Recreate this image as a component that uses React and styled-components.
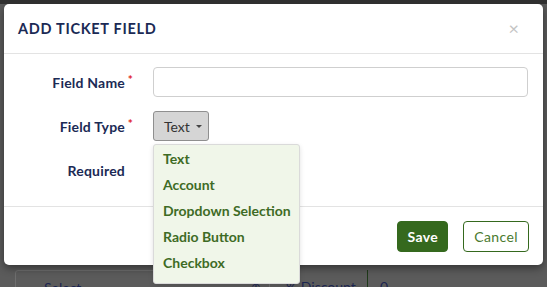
import React from 'react'
import styled, { createGlobalStyle } from 'styled-components'

const GlobalStyle = createGlobalStyle`
  html, body {
    margin: 0;
    padding: 0;
    width: 547px;
    height: 287px;
    overflow: hidden;
    font-family: Lato, "Noto Sans", sans-serif;
  }
`

const Page = styled.div`
  position: relative;
  width: 547px;
  height: 287px;
  background: #5b5b5b;
  overflow: hidden;
  border-top: 4px solid #2f2f2f;
  box-sizing: border-box;
`

const BehindRow = styled.div`
  position: absolute;
  left: 15px;
  top: 266px;
  display: flex;
  align-items: flex-start;
  font-size: 14px;
  color: #1e2a45;
`

const BehindSelect = styled.div`
  width: 255px;
  height: 30px;
  box-sizing: border-box;
  border: 1px solid #6e6e6e;
  border-radius: 3px;
  display: flex;
  justify-content: space-between;
  padding: 8px 8px 0 28px;
  color: #1b2550;
`

const BehindCell = styled.div`
  width: 98px;
  height: 30px;
  box-sizing: border-box;
  border-right: ${p => (p.$last ? 'none' : '1px solid #1f3a1a')};
  padding: 8px 0 0 ${p => (p.$last ? '12px' : '16px')};
  color: #1b2550;
`

const Backdrop = styled.div`
  position: absolute;
  inset: 0;
  padding: 0 4px;
`

const Modal = styled.div`
  width: 539px;
  height: 261px;
  background: #fff;
  border-radius: 5px;
  box-shadow: 0 3px 8px rgba(0, 0, 0, 0.45);
  display: flex;
  flex-direction: column;
  box-sizing: border-box;
`

const Header = styled.div`
  height: 50px;
  box-sizing: border-box;
  border-bottom: 1px solid #e3e3e3;
  display: flex;
  align-items: center;
  justify-content: space-between;
  padding: 0 24px 1px 14px;
`

const Title = styled.h4`
  margin: 0;
  font-size: 14.5px;
  font-weight: 700;
  letter-spacing: 0.7px;
  color: #1b2a55;
`

const Close = styled.span`
  font-size: 18px;
  color: #c4c4c4;
  line-height: 1;
`

const Body = styled.div`
  position: relative;
  height: 153px;
  box-sizing: border-box;
  border-bottom: 1px solid #e3e3e3;
  padding: 13px 15px 0 0;
  display: grid;
  grid-template-columns: 134px 1fr;
  grid-auto-rows: min-content;
  column-gap: 15px;
  row-gap: 14px;
`

const Label = styled.label`
  position: relative;
  height: 30px;
  display: flex;
  align-items: center;
  justify-content: flex-end;
  padding-right: 13px;
  font-size: 14px;
  font-weight: 700;
  letter-spacing: 0.2px;
  color: #1b2a55;
`

const Star = styled.span`
  position: absolute;
  right: 5px;
  top: 5px;
  color: #e02424;
  font-size: 12px;
`

const Input = styled.input`
  height: 30px;
  box-sizing: border-box;
  border: 1px solid #cfcfcf;
  border-radius: 4px;
  outline: none;
`

const SelectWrap = styled.div`
  position: relative;
  height: 30px;
`

const SelectButton = styled.button`
  height: 30px;
  width: 56px;
  box-sizing: border-box;
  background: #d5d5d5;
  border: 1px solid #8f8f8f;
  border-radius: 3px;
  font-family: inherit;
  font-size: 14px;
  color: #333;
  display: flex;
  align-items: center;
  gap: 6px;
  padding: 0 0 0 10px;
`

const Caret = styled.span`
  width: 0;
  height: 0;
  border-left: 3px solid transparent;
  border-right: 3px solid transparent;
  border-top: 3px solid #444;
`

const Checkbox = styled.div`
  width: 13px;
  height: 13px;
  margin-top: 9px;
  border: 1px solid #666;
  border-radius: 2px;
  box-sizing: border-box;
`

const Menu = styled.ul`
  position: absolute;
  left: 0;
  top: 33px;
  width: 147px;
  height: 140px;
  box-sizing: border-box;
  margin: 0;
  padding: 1px 0 8px;
  list-style: none;
  background: #f0f6e9;
  border: 1px solid #dadada;
  border-radius: 3px;
  box-shadow: 0 2px 5px rgba(0, 0, 0, 0.12);
  z-index: 2;
`

const MenuItem = styled.li`
  height: 26px;
  line-height: 26px;
  padding-left: 9px;
  font-size: 14px;
  font-weight: 700;
  color: #3e6b25;
  white-space: nowrap;
`

const Footer = styled.div`
  flex: 1;
  display: flex;
  align-items: center;
  justify-content: flex-end;
  gap: 15px;
  padding: 0 14px 0 0;
`

const Button = styled.button`
  height: 31px;
  box-sizing: border-box;
  padding: 0 ${p => (p.$primary ? '9px' : '10px')};
  border-radius: 4px;
  border: 1px solid #35691e;
  background: ${p => (p.$primary ? '#35691e' : '#fff')};
  color: ${p => (p.$primary ? '#fff' : '#4a7a2e')};
  font-family: inherit;
  font-size: 14px;
  font-weight: ${p => (p.$primary ? 700 : 400)};
  letter-spacing: 0.4px;
`

const options = ['Text', 'Account', 'Dropdown Selection', 'Radio Button', 'Checkbox']

export default function App() {
  return (
    <Page>
      <GlobalStyle />
      <BehindRow>
        <BehindSelect>
          <span>Select</span>
          <span>↕</span>
        </BehindSelect>
        <BehindCell>% Discount</BehindCell>
        <BehindCell $last>0</BehindCell>
      </BehindRow>
      <Backdrop>
        <Modal>
          <Header>
            <Title>ADD TICKET FIELD</Title>
            <Close>×</Close>
          </Header>
          <Body>
            <Label>
              Field Name<Star>*</Star>
            </Label>
            <Input />
            <Label>
              Field Type<Star>*</Star>
            </Label>
            <SelectWrap>
              <SelectButton>
                Text <Caret />
              </SelectButton>
              <Menu>
                {options.map(o => (
                  <MenuItem key={o}>{o}</MenuItem>
                ))}
              </Menu>
            </SelectWrap>
            <Label>Required</Label>
            <Checkbox />
          </Body>
          <Footer>
            <Button $primary>Save</Button>
            <Button>Cancel</Button>
          </Footer>
        </Modal>
      </Backdrop>
    </Page>
  )
}
